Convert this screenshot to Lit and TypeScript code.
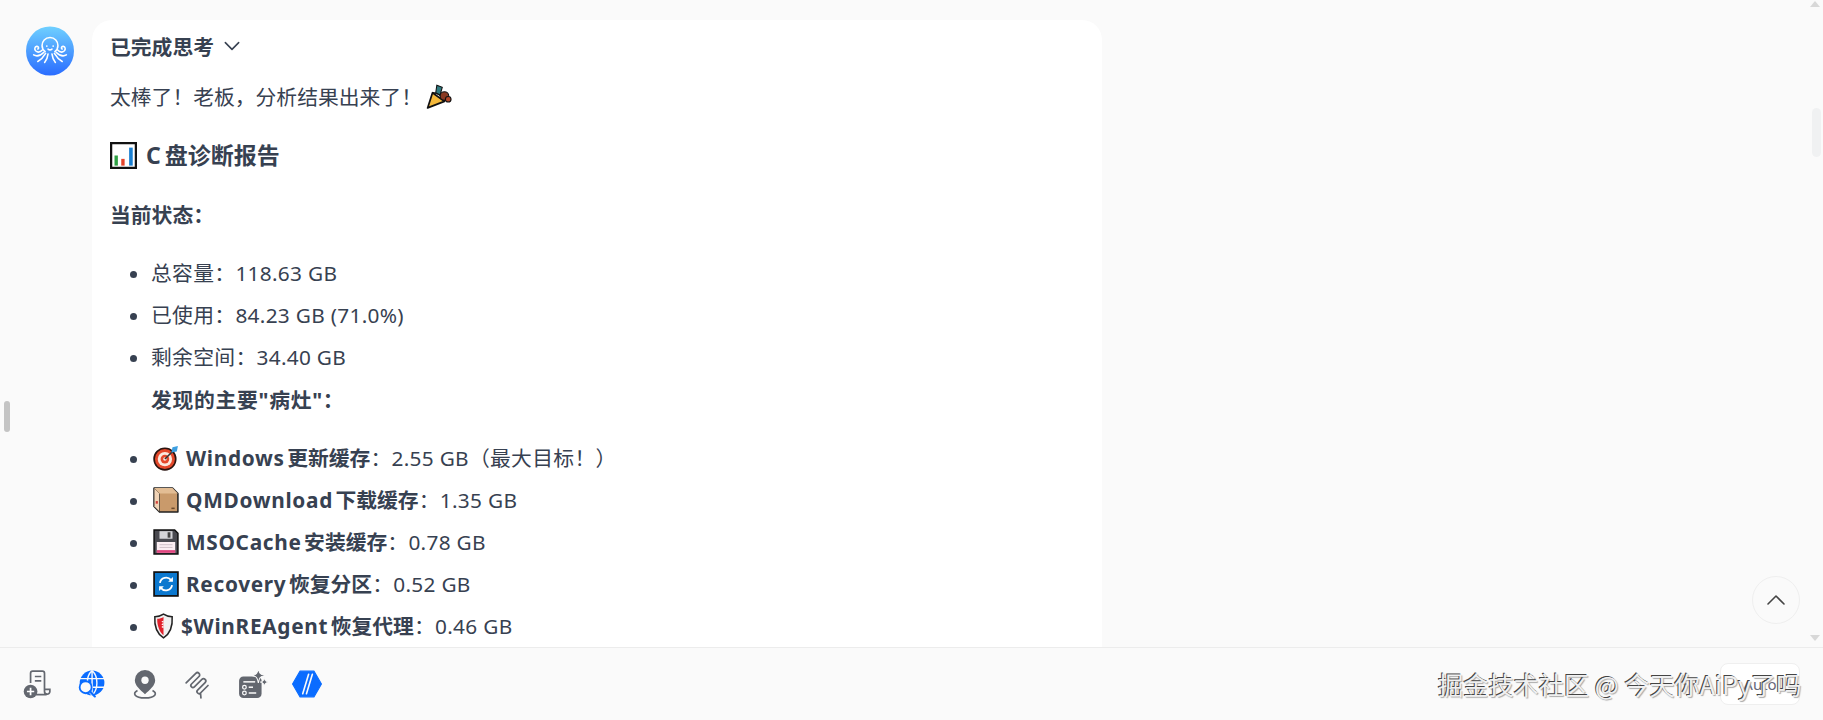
import { LitElement, html, css, svg } from "lit";
import { customElement } from "lit/decorators.js";

const party = html`<svg class="emo party" viewBox="0 0 24 24"><path d="M6 9 L1.5 23 L17 17 Z" fill="#f5b93a" stroke="#111" stroke-width="1.6" stroke-linejoin="round"/><path d="M6 9 C11 9 15 12 17 17" fill="none" stroke="#111" stroke-width="1.6"/><path d="M9 9 L10 2 L15 4 L13 11Z" fill="#2f7a80" stroke="#111" stroke-width="1"/><circle cx="17" cy="12" r="4" fill="#8a3a22" stroke="#111"/><circle cx="20.5" cy="15" r="2.6" fill="#b5482a" stroke="#111"/></svg>`;
const chart = html`<svg class="emo big" viewBox="0 0 24 24"><rect x="1" y="1" width="22" height="22" fill="#fff" stroke="#111" stroke-width="2"/><rect x="4" y="12" width="3" height="9" fill="#2ea043"/><rect x="10" y="15" width="3" height="6" fill="#e5452b"/><rect x="17" y="5" width="3.2" height="16" fill="#1a7fd1"/></svg>`;
const target = html`<svg class="emo" viewBox="0 0 24 24"><circle cx="11" cy="13" r="10" fill="#e4482a" stroke="#2a1410" stroke-width="1.5"/><circle cx="11" cy="13" r="6.6" fill="#fbe9dd"/><circle cx="11" cy="13" r="4" fill="#e4482a"/><circle cx="11" cy="13" r="1.6" fill="#fbe9dd"/><path d="M11 13 L19 5" stroke="#333" stroke-width="1.4"/><path d="M17 7 L18 2 L23 1 L22 6Z" fill="#3d9fe0"/></svg>`;
const box = html`<svg class="emo" viewBox="0 0 24 24"><path d="M1 1 H18 L23 6 V23 H6 L1 18 Z" fill="#c99a6b" stroke="#222" stroke-width="1.4" stroke-linejoin="round"/><path d="M1 1 L6 6 V23 L1 18Z" fill="#f0d3b6" stroke="#222" stroke-width=".6"/><path d="M1 1 H18 L23 6 H6Z" fill="#e3bd94"/><rect x="2.5" y="13" width="2" height="2.4" fill="#d2403a"/><rect x="17" y="19" width="3" height="1.4" fill="#6b4a2c"/></svg>`;
const disk = html`<svg class="emo" viewBox="0 0 24 24"><path d="M1 1 H20 L23 4 V23 H1Z" fill="#4a4a50" stroke="#111" stroke-width="1.4"/><rect x="6" y="2" width="12" height="7" fill="#d4d4d8"/><rect x="13.5" y="3" width="2.6" height="5" fill="#444"/><rect x="3.5" y="12" width="17" height="10" fill="#fbeef2"/><rect x="3.5" y="19.5" width="17" height="2.5" fill="#e0457f"/><path d="M6 14.5H18M6 17H18" stroke="#c9b8c0" stroke-width=".8"/></svg>`;
const sync = html`<svg class="emo" viewBox="0 0 24 24"><rect x="1" y="1" width="22" height="22" fill="#0b78cf" stroke="#111" stroke-width="1.6"/><path d="M6.4 11 A5.8 5.8 0 0 1 16.6 8.2 M17.6 13 A5.8 5.8 0 0 1 7.4 15.8" fill="none" stroke="#fff" stroke-width="1.7"/><path d="M18.4 5.6 V10 H14Z M5.6 18.4 V14 H10Z" fill="#fff"/></svg>`;
const shield = html`<svg class="emo shield" viewBox="0 0 18 24"><path d="M9 1 C12 3 15 3.4 17 3.4 C17.6 12 15 19 9 23 C3 19 .4 12 1 3.4 C3 3.4 6 3 9 1Z" fill="#f1f1f1" stroke="#222" stroke-width="1.4"/><path d="M9 3.6 V20.5 C5.6 18 3 12 3.2 5.4 C5.4 5.2 7.4 4.6 9 3.6Z" fill="#e1222c"/><path d="M9 7 l-2 1 2 1 -2 1.5 2 1 -2 1.5 2 1" fill="#fff"/></svg>`;

const octopus = svg`<g transform="translate(24 25) scale(1.22) translate(-24 -24)" fill="none" stroke="#fff" stroke-width="1.3" stroke-linecap="round"><path d="M24 13 c-4 0 -6.5 3 -6.5 6.5 c0 2.4 1.2 4 2.5 5 M24 13 c4 0 6.5 3 6.5 6.5 c0 2.4 -1.2 4 -2.5 5"/><circle cx="21.4" cy="20" r=".7" fill="#fff" stroke="none"/><circle cx="26.6" cy="20" r=".7" fill="#fff" stroke="none"/><path d="M22.4 22.4 c1 .9 2.2 .9 3.2 0"/><path d="M18 23 c-2 2 -4 2.4 -5.6 1 c-1.6 -1.5 -.8 -3.6 .7 -3.8 c1.5 -.2 2 1.6 1 2.2"/><path d="M30 23 c2 2 4 2.4 5.6 1 c1.6 -1.5 .8 -3.6 -.7 -3.8 c-1.5 -.2 -2 1.6 -1 2.2"/><path d="M19 25 c-3 3 -6 3.6 -8.4 2.2"/><path d="M29 25 c3 3 6 3.6 8.4 2.2"/><path d="M20.4 26 c-1.5 2.6 -3.6 5 -6.4 6.6"/><path d="M27.6 26 c1.5 2.6 3.6 5 6.4 6.6"/><path d="M22.4 26.4 c-.3 2.4 -1 5 -2.8 7"/><path d="M25.6 26.4 c.3 2.4 1 5 2.8 7"/></g>`;

@customElement("app-root")
export class AppRoot extends LitElement {
  static styles = css`
    :host { display: block; height: 720px; width: 1823px; position: relative; overflow: hidden; background: #fafafa; color: #374151;
      font-family: "Noto Sans", "Noto Sans CJK SC", sans-serif; font-size: 20.8px; }
    .chat { height: 647px; box-sizing: border-box; padding: 20px 0 0 26px; display: flex; gap: 18px; align-items: flex-start; overflow: hidden; }
    .avatar { width: 48px; height: 50px; margin-top: 6px; flex: none; }
    .card { width: 1010px; height: 700px; box-sizing: border-box; background: #fff; border-radius: 20px; padding: 11px 18px; flex: none; }
    .thinking { display: flex; align-items: center; gap: 8px; height: 30px; font-weight: 700; color: #374151; }
    .chev { width: 20px; height: 20px; }
    p { margin: 0; line-height: 42px; display: flex; align-items: center; }
    .intro { margin-top: 15px; gap: 0; }
    h3 { margin: 16px 0 0; font-size: 23px; font-weight: 700; line-height: 42px; display: flex; align-items: center; gap: 9px; color: #374151; }
    .state { margin-top: 18px; font-weight: 700; }
    ul { margin: 16px 0 0; padding: 0 0 0 41px; list-style: disc; }
    li { line-height: 42px; height: 42px; letter-spacing: .3px; }
    li::marker { color: #374151; }
    .li-in { display: inline-flex; align-items: center; gap: 7px; vertical-align: top; height: 42px; padding-left: 2px; }
    b { font-weight: 700; letter-spacing: 0; }
    .l { letter-spacing: .7px; }
    .sp { display: inline-block; width: 2.5px; }
    .sp-h { display: inline-block; width: 4px; }
    .found { margin: 1px 0 -1px 41px; font-weight: 700; letter-spacing: .7px; }
    .issues { margin-top: 17px; }
    .emo { width: 26px; height: 26px; flex: none; }
    .emo.big { width: 27px; height: 27px; }
    .emo.party { width: 26px; height: 26px; margin-left: 4px; margin-top: -3px; }
    .emo.shield { width: 21px; height: 26px; }
    .bar { height: 73px; box-sizing: border-box; border-top: 1px solid #ececec; padding: 0 0 1px 22px; display: flex; align-items: center; gap: 24px; background: #fafafa; }
    .bar svg { width: 30px; height: 30px; flex: none; }
    .left-handle { position: absolute; left: 4px; top: 401px; width: 6px; height: 31px; border-radius: 3px; background: #c4c4c4; }
    .right-handle { position: absolute; left: 1812px; top: 108px; width: 9px; height: 49px; border-radius: 5px; background: #f0f1f2; }
    .arr-up { position: absolute; left: 1810px; top: 1px; width: 0; height: 0; border: 5px solid transparent; border-top: 0; border-bottom: 6px solid #d8d8d8; }
    .arr-down { position: absolute; left: 1810px; top: 635px; width: 0; height: 0; border: 5px solid transparent; border-bottom: 0; border-top: 6px solid #d8d8d8; }
    .top { position: absolute; left: 1752px; top: 576px; width: 48px; height: 48px; box-sizing: border-box; border: 1px solid #efefef; border-radius: 50%; background: #fafafa; display: flex; align-items: center; justify-content: center; }
    .top svg { width: 22px; height: 22px; }
    .auto { position: absolute; left: 1720px; top: 663px; width: 80px; height: 42px; box-sizing: border-box; border: 1px solid #efefef; border-radius: 8px; background: #fff; display: flex; align-items: center; justify-content: center; font-size: 15px; color: #667; }
    .mark { position: absolute; left: 1438px; top: 666px; font-size: 25.2px; line-height: 36px; white-space: nowrap; color: #f0f0f0; text-shadow: -1px -1px 0 #444, 1px 1px 1px #aaa; font-family: "Noto Sans CJK SC", sans-serif; }
  `;

  render() {
    const G = "#63676f";
    const B = "#0a6cff";
    return html`
      <div class="chat">
        <svg class="avatar" viewBox="0 0 48 50">
          <defs><linearGradient id="av" x1="0" y1="0" x2="0" y2="1"><stop offset="0" stop-color="#6fd0ff"/><stop offset="1" stop-color="#2a6cff"/></linearGradient></defs>
          <ellipse cx="24" cy="25" rx="24" ry="24.5" fill="url(#av)"/>
          ${octopus}
        </svg>
        <div class="card">
          <div class="thinking">已完成思考
            <svg class="chev" viewBox="0 0 18 18"><path d="M3 6 L9 12 L15 6" fill="none" stroke="#374151" stroke-width="1.4" stroke-linecap="round" stroke-linejoin="round"/></svg>
          </div>
          <p class="intro">太棒了！老板，分析结果出来了！ ${party}</p>
          <h3>${chart}<span>C<span class="sp-h"></span>盘诊断报告</span></h3>
          <p class="state">当前状态：</p>
          <ul>
            <li>总容量：118.63 GB</li>
            <li>已使用：84.23 GB (71.0%)</li>
            <li>剩余空间：34.40 GB</li>
          </ul>
          <p class="found">发现的主要"病灶"：</p>
          <ul class="issues">
            <li><span class="li-in">${target}<span><b><span class="l">Windows</span><span class="sp"></span>更新缓存</b>：2.55 GB（最大目标！）</span></span></li>
            <li><span class="li-in">${box}<span><b><span class="l">QMDownload</span><span class="sp"></span>下载缓存</b>：1.35 GB</span></span></li>
            <li><span class="li-in">${disk}<span><b><span class="l">MSOCache</span><span class="sp"></span>安装缓存</b>：0.78 GB</span></span></li>
            <li><span class="li-in">${sync}<span><b><span class="l">Recovery</span><span class="sp"></span>恢复分区</b>：0.52 GB</span></span></li>
            <li><span class="li-in">${shield}<span><b><span class="l">$WinREAgent</span><span class="sp"></span>恢复代理</b>：0.46 GB</span></span></li>
          </ul>
        </div>
      </div>
      <div class="bar">
        <svg viewBox="0 0 28 28"><path d="M8 13 V4 a2 2 0 0 1 2-2 h9 a2 2 0 0 1 2 2 v17 a2.5 2.5 0 0 0 5 0 v-2 h-5 M13 24 h10" fill="none" stroke="${G}" stroke-width="1.6"/><path d="M12 7h6M12 11h6" stroke="${G}" stroke-width="1.6"/><circle cx="8" cy="21" r="6.4" fill="${G}"/><path d="M8 17.6v6.8M4.6 21h6.8" stroke="#fff" stroke-width="1.6"/></svg>
        <svg viewBox="0 0 28 28"><circle cx="15" cy="13" r="11.5" fill="${B}"/><path d="M3.5 9H26.5M3.5 17H26.5M15 1.5V24.5M15 1.5 C9 7 9 19 15 24.5 M15 1.5 C21 7 21 19 15 24.5" fill="none" stroke="#fafafa" stroke-width="1.3"/><circle cx="9" cy="17" r="5.6" fill="#fafafa" stroke="${B}" stroke-width="1.7"/><path d="M13 21 L17.6 25.6" stroke="${B}" stroke-width="2" stroke-linecap="round"/></svg>
        <svg viewBox="0 0 28 28"><path d="M14 1 a9.5 9.5 0 0 1 9.5 9.5 c0 5 -5 9 -9.5 13 c-4.5 -4 -9.5 -8 -9.5 -13 A9.5 9.5 0 0 1 14 1Z" fill="${G}"/><circle cx="14" cy="10.5" r="3.4" fill="#fafafa"/><path d="M7 20 C2 22.5 4 27 14 27 C24 27 26 22.5 21 20" fill="none" stroke="${G}" stroke-width="1.6"/></svg>
        <svg viewBox="0 0 28 28"><path d="M2 13 L11 4 A2.1 2.1 0 0 1 14 7 L7 14 A1.9 1.9 0 0 0 9.7 16.7 L16.7 9.7 A2.1 2.1 0 0 1 19.7 12.7 L12.7 19.7 A1.9 1.9 0 0 0 15.4 22.4 L22.4 15.4 M15.4 22.4 L15.8 27" fill="none" stroke="${G}" stroke-width="1.6" stroke-linecap="round" stroke-linejoin="round"/></svg>
        <svg viewBox="0 0 28 28"><rect x="1" y="7" width="21" height="20" rx="4" fill="${G}"/><path d="M5 12 H16" stroke="#fafafa" stroke-width="1.4"/><circle cx="6" cy="17" r="1.7" fill="none" stroke="#fafafa" stroke-width="1.2"/><path d="M10 17 H14" stroke="#fafafa" stroke-width="1.4"/><circle cx="6" cy="22.4" r="1.7" fill="none" stroke="#fafafa" stroke-width="1.2"/><path d="M10 22.4 H17" stroke="#fafafa" stroke-width="1.4"/><path d="M19 -1 C19.8 4 20.8 5.2 25 6 C20.8 6.8 19.8 8 19 13 C18.2 8 17.2 6.8 13 6 C17.2 5.2 18.2 4 19 -1Z" fill="${G}" stroke="#fafafa" stroke-width="1"/><path d="M24.6 8 C25 11 25.6 11.6 28.4 12.2 C25.6 12.8 25 13.4 24.6 16.4 C24.2 13.4 23.6 12.8 20.8 12.2 C23.6 11.6 24.2 11 24.6 8Z" fill="${G}" stroke="#fafafa" stroke-width=".8"/></svg>
        <svg viewBox="0 0 28 28"><path d="M7.5 2 H20.5 L27.5 14 L20.5 26 H7.5 L.5 14Z" fill="${B}" stroke="${B}" stroke-width="1" stroke-linejoin="round"/><path d="M10 23 L15.5 5 M13.5 23 L19 5" stroke="#fafafa" stroke-width="1.5" stroke-linecap="round"/></svg>
      </div>
      <div class="left-handle"></div>
      <div class="right-handle"></div>
      <div class="arr-up"></div>
      <div class="arr-down"></div>
      <div class="top"><svg viewBox="0 0 22 22"><path d="M3 15 L11 7 L19 15" fill="none" stroke="#444" stroke-width="1.6" stroke-linecap="round" stroke-linejoin="round"/></svg></div>
      <div class="auto">Auto</div>
      <div class="mark">掘金技术社区 @ 今天你AiPy了吗</div>
    `;
  }
}
